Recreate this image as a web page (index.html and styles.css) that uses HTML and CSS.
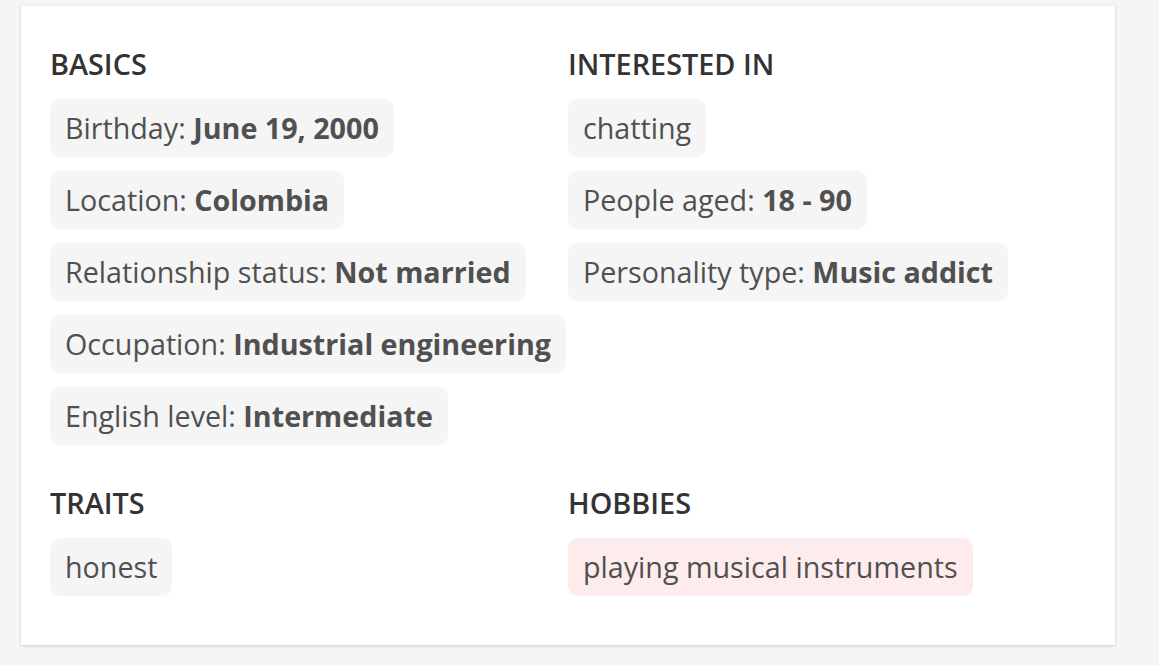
FILE: index.html
```html
<!DOCTYPE html>
<html lang="en">
  <head>
    <meta charset="UTF-8" />
    <meta name="viewport" content="width=device-width, initial-scale=1.0" />
    <title>Profile details</title>
    <link rel="stylesheet" href="styles.css">
  </head>
  <body>
    <div class="card">
      <div class="section">
        <h3>Basics</h3>
        <div class="chips">
          <span class="chip">Birthday: <b>June 19, 2000</b></span>
          <span class="chip">Location: <b>Colombia</b></span>
          <span class="chip">Relationship status: <b>Not married</b></span>
          <span class="chip">Occupation: <b>Industrial engineering</b></span>
          <span class="chip">English level: <b>Intermediate</b></span>
        </div>
      </div>
      <div class="section">
        <h3>Interested in</h3>
        <div class="chips">
          <span class="chip">chatting</span>
          <span class="chip">People aged: <b>18 - 90</b></span>
          <span class="chip">Personality type: <b>Music addict</b></span>
        </div>
      </div>
      <div class="section">
        <h3>Traits</h3>
        <div class="chips">
          <span class="chip">honest</span>
        </div>
      </div>
      <div class="section">
        <h3>Hobbies</h3>
        <div class="chips">
          <span class="chip chip-hobby">playing musical instruments</span>
        </div>
      </div>
    </div>
  </body>
</html>
```

FILE: styles.css
```css
html,
body {
  margin: 0;
  box-sizing: border-box;
  font-family: "Open Sans", "Noto Sans", sans-serif;
}

body {
  background: #f5f5f5;
  padding: 6px 0 0 21px;
  height: 665px;
}

.card {
  width: 1094px;
  box-sizing: border-box;
  padding: 40px 29px 49px;
  background: #fff;
  box-shadow: 0 1px 3px rgba(0, 0, 0, 0.18);
  display: grid;
  grid-template-columns: 1fr 1fr;
  row-gap: 40px;
}

h3 {
  margin: 0 0 17px;
  font-size: 28.8px;
  line-height: 36px;
  font-weight: 600;
  text-transform: uppercase;
  color: #333;
}

.chips {
  display: flex;
  flex-direction: column;
  align-items: flex-start;
  gap: 14px;
}

.chip {
  display: inline-block;
  padding: 11px 15px;
  font-size: 28.7px;
  line-height: 36px;
  color: #505050;
  background: #f5f5f5;
  border-radius: 10px;
}

.chip b {
  font-weight: 700;
}

.chip-hobby {
  background: #fdeceb;
}
```
